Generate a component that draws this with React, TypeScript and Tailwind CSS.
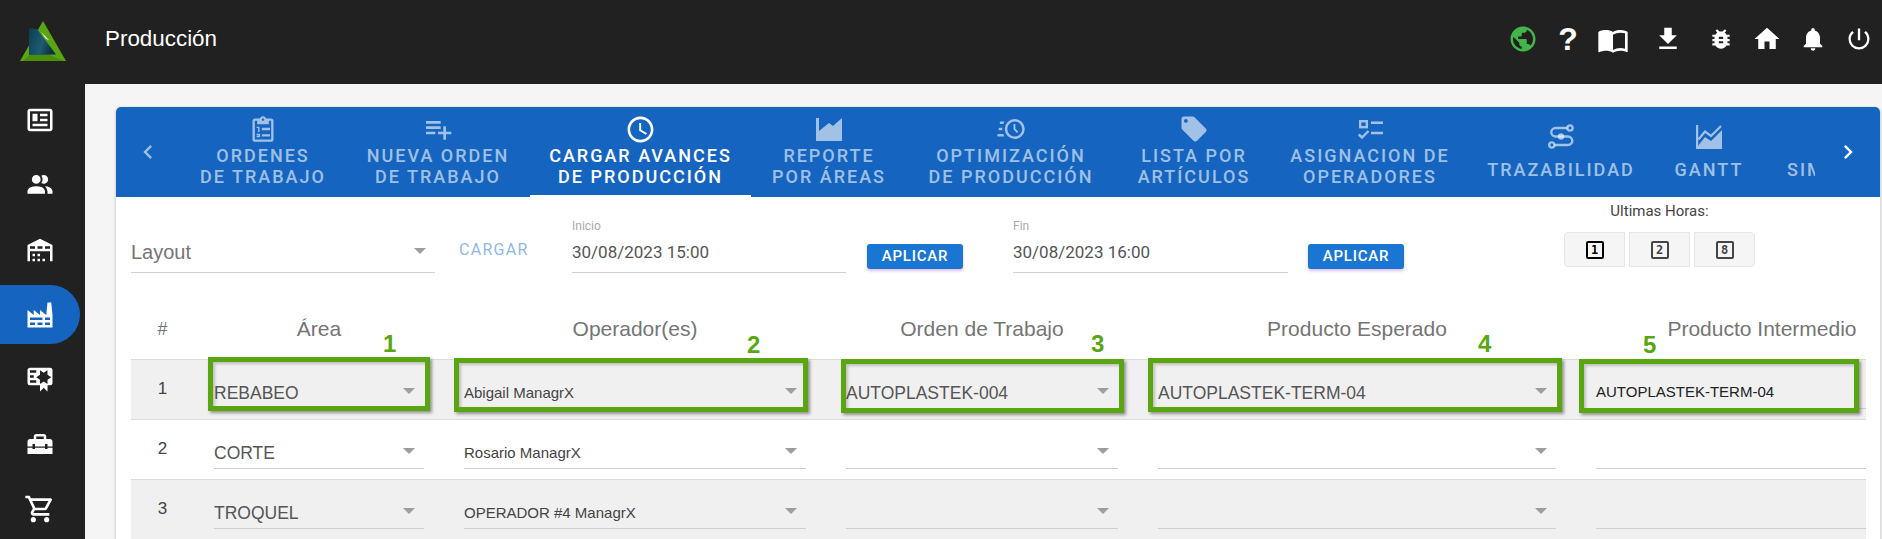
import React from "react";
import {
  MdPublic, MdFileDownload, MdHome, MdNotifications, MdPowerSettingsNew,
  MdOutlineShoppingCart, MdChevronLeft, MdChevronRight, MdPlaylistAdd, MdAccessTime, MdLocalOffer,
} from "react-icons/md";

const P = ({ d, className }: { d: string; className?: string }) => (
  <svg viewBox="0 0 24 24" fill="currentColor" className={className}><path d={d} /></svg>
);

const paths = {
  news: "M20 5L20 19L4 19L4 5H20M20 3H4C2.89 3 2 3.89 2 5V19C2 20.11 2.89 21 4 21H20C21.11 21 22 20.11 22 19V5C22 3.89 21.11 3 20 3M18 15H6V17H18V15M10 7H6V13H10V7M12 9H18V7H12V9M18 11H12V13H18V11Z",
  people: "M16 17V19H2V17S2 13 9 13 16 17 16 17M12.5 7.5A3.5 3.5 0 1 0 9 11A3.5 3.5 0 0 0 12.5 7.5M15.94 13A5.32 5.32 0 0 1 18 17V19H22V17S22 13.37 15.94 13M15 4A3.39 3.39 0 0 0 13.07 4.59A5 5 0 0 1 13.07 10.41A3.39 3.39 0 0 0 15 11A3.5 3.5 0 0 0 15 4Z",
  warehouse: "M6 19H8V21H6V19M12 3L2 8V21H4V13H20V21H22V8L12 3M8 11H4V9H8V11M14 11H10V9H14V11M20 11H16V9H20V11M6 15H8V17H6V15M10 15H12V17H10V15M10 19H12V21H10V19M14 19H16V21H14V19Z",
  factory: "M4,18V20H8V18H4M4,14V16H14V14H4M10,18V20H14V18H10M16,14V16H20V14H16M16,18V20H20V18H16M2,22V8L7,12V8L12,12V8L17,12L18,2H21L22,12V22H2Z",
  cert: "M4,3C2.89,3 2,3.89 2,5V15A2,2 0 0,0 4,17H12V22L15,19L18,22V17H20A2,2 0 0,0 22,15V8L22,6V5A2,2 0 0,0 20,3H16V3H4M12,5L15,7L18,5V8.5L21,10.5L18,12.5V16L15,14L12,16V12.5L9,10.5L12,8.5V5M4,5H9V7H4V5M4,9H7V11H4V9M4,13H9V15H4V13Z",
  toolbox: "M18 16H16V15H8V16H6V15H2V20H22V15H18V16M20 8H17V6C17 4.9 16.1 4 15 4H9C7.9 4 7 4.9 7 6V8H4C2.9 8 2 8.9 2 10V14H6V12H8V14H16V12H18V14H22V10C22 8.9 21.1 8 20 8M15 8H9V6H15V8Z",
  book: "M21 5C19.89 4.65 18.67 4.5 17.5 4.5C15.55 4.5 13.45 4.9 12 6C10.55 4.9 8.45 4.5 6.5 4.5C4.55 4.5 2.45 4.9 1 6V20.65C1 20.9 1.25 21.15 1.5 21.15C1.6 21.15 1.65 21.1 1.75 21.1C3.1 20.45 5.05 20 6.5 20C8.45 20 10.55 20.4 12 21.5C13.35 20.65 15.8 20 17.5 20C19.15 20 20.85 20.3 22.25 21.05C22.35 21.1 22.4 21.1 22.5 21.1C22.75 21.1 23 20.85 23 20.6V6C22.4 5.55 21.75 5.25 21 5M21 18.5C19.9 18.15 18.7 18 17.5 18C15.8 18 13.35 18.65 12 19.5V8C13.35 7.15 15.8 6.5 17.5 6.5C18.7 6.5 19.9 6.65 21 7V18.5Z",
  bug: "M14,12H10V10H14M14,16H10V14H14M20,8H17.19C16.74,7.22 16.12,6.55 15.37,6.04L17,4.41L15.59,3L13.42,5.17C12.96,5.06 12.5,5 12,5C11.5,5 11.04,5.06 10.59,5.17L8.41,3L7,4.41L8.62,6.04C7.88,6.55 7.26,7.22 6.81,8H4V10H6.09C6.04,10.33 6,10.66 6,11V12H4V14H6V15C6,15.34 6.04,15.67 6.09,16H4V18H6.81C7.85,19.79 9.78,21 12,21C14.22,21 16.15,19.79 17.19,18H20V16H17.91C17.96,15.67 18,15.34 18,15V14H20V12H18V11C18,10.66 17.96,10.33 17.91,10H20V8Z",
  clock: "M15,4A8,8 0 0,1 23,12A8,8 0 0,1 15,20A8,8 0 0,1 7,12A8,8 0 0,1 15,4M15,6A6,6 0 0,0 9,12A6,6 0 0,0 15,18A6,6 0 0,0 21,12A6,6 0 0,0 15,6M14,8H15.5V11.78L17.83,14.11L16.77,15.17L14,12.4V8M2,18A1,1 0 0,1 1,17A1,1 0 0,1 2,16H5.83C6.07,16.71 6.38,17.38 6.76,18H2M3,13A1,1 0 0,1 2,12A1,1 0 0,1 3,11H5.05L5,12L5.05,13H3M4,8A1,1 0 0,1 3,7A1,1 0 0,1 4,6H6.76C6.38,6.62 6.07,7.29 5.83,8H4Z",
  clip: "M19 3H14.82C14.4 1.84 13.3 1 12 1S9.6 1.84 9.18 3H5C3.9 3 3 3.9 3 5V21C3 22.1 3.9 23 5 23H19C20.1 23 21 22.1 21 21V5C21 3.9 20.1 3 19 3M12 3C12.55 3 13 3.45 13 4S12.55 5 12 5 11 4.55 11 4 11.45 3 12 3M19 21H5V5H7V8H17V5H19V21M6.5 10H9V14.5H7.8V11.2H6.5V10M6.5 16H9.5V19H6.5V18H8.3V17.6H6.5V16M11 11H18V13H11V11M11 16.5H18V18.5H11V16.5Z",
};

const navItems: { d: string; active?: boolean }[] = [
  { d: paths.news }, { d: paths.people }, { d: paths.warehouse }, { d: paths.factory, active: true }, { d: paths.cert }, { d: paths.toolbox },
];

const Arrow = () => (
  <svg viewBox="0 0 12 6" className="w-[12px] h-[6px] shrink-0 text-[#9e9e9e]" fill="currentColor"><path d="M0 0H12L6 6Z" /></svg>
);

const Sel = ({ text, small, w }: { text?: string; small?: boolean; w: string }) => (
  <div className={`${w} h-[49px] border-b border-[#d0d0d0] flex items-end justify-between pr-[9px] pb-[5px]`}>
    <span className={small ? "text-[15px] leading-[20px] text-[#444]" : "text-[17.5px] leading-[20px] text-[#555]"}>{text}</span>
    <span className="mb-[9px]"><Arrow /></span>
  </div>
);

const tabs: { w: string; icon: React.ReactNode; l1?: string; l2: string; active?: boolean }[] = [
  { w: "w-[166px]", icon: <P d={paths.clip} className="w-[28px] h-[28px]" />, l1: "ORDENES", l2: "DE TRABAJO" },
  { w: "w-[184px]", icon: <MdPlaylistAdd className="w-[32px] h-[32px] -my-[2px]" />, l1: "NUEVA ORDEN", l2: "DE TRABAJO" },
  { w: "w-[221px]", icon: <MdAccessTime className="w-[31px] h-[31px] -my-[1.5px]" />, l1: "CARGAR AVANCES", l2: "DE PRODUCCIÓN", active: true },
  { w: "w-[156px]", icon: (
    <svg viewBox="0 0 26 23" fill="currentColor" className="w-[26px] h-[23px] my-[2.5px]"><path d="M0 0H3V13L13 5L17 8L26 0V23H0Z" /></svg>
  ), l1: "REPORTE", l2: "POR ÁREAS" },
  { w: "w-[208px]", icon: <P d={paths.clock} className="w-[30px] h-[30px] -my-[1px]" />, l1: "OPTIMIZACIÓN", l2: "DE PRODUCCIÓN" },
  { w: "w-[158px]", icon: <MdLocalOffer className="w-[30px] h-[30px] -my-[1px]" />, l1: "LISTA POR", l2: "ARTÍCULOS" },
  { w: "w-[194px]", icon: (
    <svg viewBox="0 0 25 19" className="w-[25px] h-[19px] my-[4px]" fill="none" stroke="currentColor" strokeWidth="2.4">
      <rect x="2.2" y="1.2" width="6.6" height="6" />
      <path d="M13 2.8H25M13 13H25M0.8 14.5L4 17.5L10.5 11" />
    </svg>
  ), l1: "ASIGNACION DE", l2: "OPERADORES" },
  { w: "w-[188px]", icon: (
    <svg viewBox="0 0 26 25" className="w-[26px] h-[25px] my-[1.5px]" fill="none" stroke="currentColor" strokeWidth="2.4">
      <circle cx="22" cy="4" r="2.6" /><circle cx="3.8" cy="21" r="2.6" />
      <circle cx="13" cy="12.5" r="3.2" fill="currentColor" stroke="none" />
      <path d="M19.4 4H7.5A4.25 4.25 0 0 0 7.5 12.5H20A4.25 4.25 0 0 1 20 21H6.4" />
    </svg>), l2: "TRAZABILIDAD" },
  { w: "w-[108px]", icon: (
    <svg viewBox="0 0 26 24" className="w-[26px] h-[24px] my-[2px]" fill="currentColor">
      <path d="M0 0H2.2V24H0Z" />
      <path d="M2.5 14.5L9 6.5L15 11L25 1" fill="none" stroke="currentColor" strokeWidth="2.2" />
      <path d="M2 21L9 12L15 16L26 5V24H2Z" />
    </svg>
  ), l2: "GANTT" },
];

const rows = [
  { n: "1", area: "REBABEO", op: "Abigail ManagrX", ot: "AUTOPLASTEK-004", pe: "AUTOPLASTEK-TERM-04", pi: "AUTOPLASTEK-TERM-04", bg: "bg-[#f0f0f0]" },
  { n: "2", area: "CORTE", op: "Rosario ManagrX", ot: "", pe: "", pi: "", bg: "bg-white" },
  { n: "3", area: "TROQUEL", op: "OPERADOR #4 ManagrX", ot: "", pe: "", pi: "", bg: "bg-[#f0f0f0]" },
];

const boxShadow = "border-[5px] border-[#5aa512] shadow-[2px_2px_3px_rgba(0,0,0,0.4),inset_2px_2px_3px_rgba(0,0,0,0.2)]";

const Aplicar = ({ cls }: { cls: string }) => (
  <div className={`${cls} w-[96px] h-[25px] mt-[47px] rounded-[3px] bg-[#1976d2] text-white font-['Roboto'] font-medium text-[15px] tracking-[0.8px] flex items-center justify-center shadow-[0_2px_3px_rgba(156,39,176,0.3)]`}>APLICAR</div>
);

const DateField = ({ label, value, w }: { label: string; value: string; w: string }) => (
  <div className={`${w} mt-[22px] h-[54px] border-b border-[#d0d0d0] font-['Roboto']`}>
    <div className="text-[12px] leading-[14px] text-[#aaa]">{label}</div>
    <div className="mt-[9px] text-[17px] leading-[20px] text-[#555]">{value}</div>
  </div>
);

const Hour = ({ n, first, ml }: { n: string; first?: boolean; ml?: string }) => (
  <div className={`w-[61px] h-[35px] ${ml ?? ""} border border-[#e5e5e5] bg-[#f5f5f5] flex items-center justify-center ${first ? "rounded-l-[4px]" : ""} ${n === "8" ? "rounded-r-[4px]" : ""}`}>
    <span className={`w-[18px] h-[18px] rounded-[2px] border-2 flex items-center justify-center font-['DejaVu_Sans_Mono'] font-bold text-[12px] leading-none ${first ? "border-black text-black" : "border-[#444] text-[#444]"}`}>{n}</span>
  </div>
);

export default function App() {
  return (
    <div className="w-[1882px] h-[539px] overflow-hidden flex flex-col bg-[#212121] font-['Liberation_Sans',sans-serif]">
      <header className="h-[84px] shrink-0 flex text-white">
        <div className="w-[85px] shrink-0 flex justify-center pt-[21px]">
          <svg viewBox="0 0 46 40" className="w-[46px] h-[40px] ml-[1px]">
            <defs>
              <linearGradient id="lg" x1="0" x2="1" y1="0" y2="0.3">
                <stop offset="0" stopColor="#0d3d55" /><stop offset="0.6" stopColor="#1c5c70" /><stop offset="1" stopColor="#102f3f" />
              </linearGradient>
            </defs>
            <path d="M23 0L46 40H0Z" fill="#5aa512" />
            <path d="M3 40L14 30L30 34L44 40Z" fill="#4b8e0c" />
            <path d="M9 7.5H13L17 8L36 33.5L9 34Z" fill="url(#lg)" />
            <path d="M21 11L29 19L26 18Z" fill="#fff" />
          </svg>
        </div>
        <div className="ml-[20px] pt-[26px] text-[22.4px] leading-[26px]">Producción</div>
        <div className="ml-auto flex pt-[24px] pr-[9px] items-start">
          <MdPublic className="w-[30px] h-[30px] text-[#43b649]" />
          <div className="w-[30px] h-[30px] ml-[15px] flex items-center justify-center text-[32px] leading-[30px] font-bold">?</div>
          <P d={paths.book} className="w-[32px] h-[32px] ml-[14px]" />
          <MdFileDownload className="w-[30px] h-[30px] ml-[24px]" />
          <P d={paths.bug} className="w-[26px] h-[26px] ml-[25px] mt-[2px]" />
          <MdHome className="w-[30px] h-[30px] ml-[18px]" />
          <MdNotifications className="w-[28px] h-[28px] ml-[17px] mt-[1px]" />
          <MdPowerSettingsNew className="w-[28px] h-[28px] ml-[18px] mt-[1px]" />
        </div>
      </header>
      <div className="flex flex-1 min-h-0">
        <nav className="w-[85px] shrink-0 flex flex-col pt-[6px] text-white">
          {navItems.map((it, i) => (
            <div key={i} className={`w-[80px] h-[60px] mb-[5px] flex items-center justify-center ${it.active ? "bg-[#1565c0] rounded-r-[30px]" : ""}`}>
              <P d={it.d} className="w-[30px] h-[30px]" />
            </div>
          ))}
          <div className="w-[80px] h-[60px] flex items-center justify-center"><MdOutlineShoppingCart className="w-[32px] h-[32px]" /></div>
        </nav>
        <main className="flex-1 bg-[#f5f5f5] pl-[31px] pr-[2px] pt-[23px] min-w-0">
          <div className="bg-white rounded-t-[5px] shadow-[0_1px_3px_rgba(0,0,0,0.3)] h-[600px]">
            <div className="h-[90px] bg-[#1565c0] rounded-t-[5px] flex font-['Roboto'] text-[18px] font-medium tracking-[2px] leading-[21px]">
              <div className="w-[64px] shrink-0 flex items-center justify-center text-white/60"><MdChevronLeft className="w-[28px] h-[28px]" /></div>
              <div className="w-[1635px] flex overflow-hidden">
                {tabs.map((t, i) => (
                  <div key={i} className={`${t.w} shrink-0 relative flex flex-col items-center justify-center text-center pb-[2px] ${t.l1 ? "gap-[2px]" : "gap-[8px]"} ${t.active ? "text-white" : "text-white/60"}`}>
                    {t.icon}
                    <div className="whitespace-nowrap">{t.l1 && <div>{t.l1}</div>}<div>{t.l2}</div></div>
                    {t.active && <span className="absolute left-0 right-0 bottom-0 h-[2px] bg-white" />}
                  </div>
                ))}
                <div className="w-[60px] shrink-0 flex items-end pb-[17px] pl-[24px] text-white/60"><span>SIM</span></div>
              </div>
              <div className="flex-1 flex items-center justify-center text-white"><MdChevronRight className="w-[28px] h-[28px]" /></div>
            </div>

            <div className="h-[102px] flex items-start pl-[15px]">
              <div className="w-[304px] mt-[22px] h-[54px] border-b border-[#d0d0d0] flex items-end justify-between pr-[9px] pb-[8px] text-[#757575]">
                <span className="text-[20px] leading-[24px]">Layout</span><span className="mb-[10px]"><Arrow /></span>
              </div>
              <div className="ml-[24px] w-[70px] mt-[44px] text-[16px] leading-[18px] tracking-[1.3px] text-[#8db8e8] font-['Roboto'] whitespace-nowrap">CARGAR</div>
              <div className="ml-[43px] flex">
                <DateField label="Inicio" value="30/08/2023 15:00" w="w-[274px]" />
                <Aplicar cls="ml-[21px]" />
              </div>
              <div className="ml-[50px] flex">
                <DateField label="Fin" value="30/08/2023 16:00" w="w-[275px]" />
                <Aplicar cls="ml-[20px]" />
              </div>
              <div className="ml-[160px] w-[191px] mt-[5px] flex flex-col items-center font-['Roboto']">
                <div className="text-[15px] leading-[18px] text-[#444]">Ultimas Horas:</div>
                <div className="flex mt-[12px]">
                  <Hour n="1" first />
                  <Hour n="2" ml="ml-[4px]" />
                  <Hour n="8" ml="ml-[4px]" />
                </div>
              </div>
            </div>

            <div className="relative w-[1735px] ml-[15px]">
              <div className="flex h-[60px] items-start pt-[18px] text-[21px] leading-[24px] text-[#757575] text-center">
                <div className="w-[63px] text-[18px]">#</div>
                <div className="w-[250px]">Área</div>
                <div className="w-[382px]">Operador(es)</div>
                <div className="w-[312px]">Orden de Trabajo</div>
                <div className="w-[438px]">Producto Esperado</div>
                <div className="w-[290px] pl-[82px] whitespace-nowrap">Producto Intermedio</div>
              </div>
              {rows.map((r) => (
                <div key={r.n} className={`flex h-[60px] border-t border-[#dcdcdc] ${r.bg}`}>
                  <div className="w-[63px] pt-[19px] text-center text-[17px] leading-[20px] text-[#444]">{r.n}</div>
                  <div className="w-[250px] px-[20px]"><Sel text={r.area} w="w-[210px]" /></div>
                  <div className="w-[382px] px-[20px]"><Sel text={r.op} small w="w-[342px]" /></div>
                  <div className="w-[312px] px-[20px]"><Sel text={r.ot} w="w-[272px]" /></div>
                  <div className="w-[438px] px-[20px]"><Sel text={r.pe} w="w-[398px]" /></div>
                  <div className="w-[290px] pl-[20px]">
                    <div className="h-[49px] border-b border-[#d0d0d0] flex items-end pb-[6px] text-[15px] leading-[20px] text-[#222]">{r.pi}</div>
                  </div>
                </div>
              ))}

              <div className={`absolute left-[77px] top-[58px] w-[222px] h-[54px] ${boxShadow}`} />
              <div className={`absolute left-[323px] top-[59px] w-[354px] h-[54px] ${boxShadow}`} />
              <div className={`absolute left-[710px] top-[60px] w-[283px] h-[54px] ${boxShadow}`} />
              <div className={`absolute left-[1017px] top-[59px] w-[414px] h-[54px] ${boxShadow}`} />
              <div className={`absolute left-[1448px] top-[60px] w-[280px] h-[54px] ${boxShadow}`} />

              <span className="absolute left-[252px] top-[31px] font-bold text-[24px] leading-[28px] text-[#5aa512]">1</span>
              <span className="absolute left-[616px] top-[32px] font-bold text-[24px] leading-[28px] text-[#5aa512]">2</span>
              <span className="absolute left-[960px] top-[31px] font-bold text-[24px] leading-[28px] text-[#5aa512]">3</span>
              <span className="absolute left-[1347px] top-[31px] font-bold text-[24px] leading-[28px] text-[#5aa512]">4</span>
              <span className="absolute left-[1512px] top-[32px] font-bold text-[24px] leading-[28px] text-[#5aa512]">5</span>
            </div>
          </div>
        </main>
      </div>
    </div>
  );
}
